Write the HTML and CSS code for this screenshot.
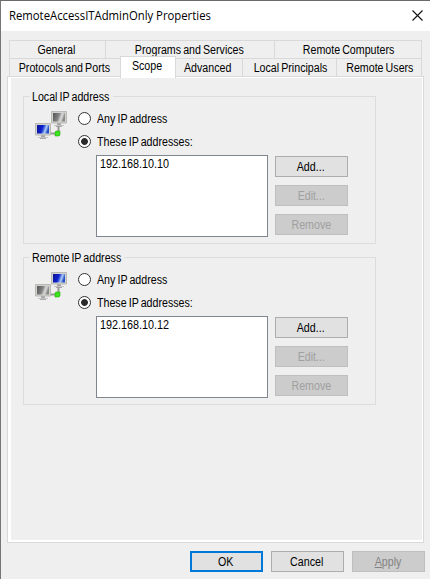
FILE: index.html
```html
<!DOCTYPE html>
<html lang="en">
<head>
<meta charset="utf-8">
<title>RemoteAccessITAdminOnly Properties</title>
<link rel="stylesheet" href="styles.css">
</head>
<body>
<svg class="defs" width="0" height="0" aria-hidden="true">
  <defs>
    <linearGradient id="blue" x1="0" y1="0" x2="1" y2=".25">
      <stop offset="0" stop-color="#0a1590"/><stop offset=".5" stop-color="#1020d0"/>
      <stop offset=".62" stop-color="#3c62dc"/><stop offset=".8" stop-color="#b4cdf5"/><stop offset="1" stop-color="#2450c8"/>
    </linearGradient>
    <linearGradient id="gray" x1="0" y1="0" x2="1" y2=".25">
      <stop offset="0" stop-color="#555"/><stop offset=".5" stop-color="#808080"/>
      <stop offset=".78" stop-color="#dcdcdc"/><stop offset="1" stop-color="#888"/>
    </linearGradient>
    <g id="frame">
      <path d="M6 12h4v2H6z" fill="#a5a5a5"/>
      <path d="M3 14h10v1H3z" fill="#c4c4c4"/><path d="M5 15h6v1H5z" fill="#aaa"/>
      <path d="M.5.5h15v11.500h-15z" fill="#d2d2cf" stroke="#b8b8b5"/>
    </g>
    <g id="cable">
      <path d="M23.500 15v5M16 22.500h5" fill="none" stroke="#999" stroke-width="2"/>
      <path d="M21 20h4v4l-1 1h-4v-4z" fill="#3be51c" stroke="#2ba616" stroke-width=".6"/>
    </g>
  </defs>
</svg>
<main class="dialog">
  <header class="titlebar">
    <h1 class="title">RemoteAccessITAdminOnly Properties</h1>
    <svg class="close" width="11" height="11" viewBox="0 0 11 11"><path d="M.5.5l10 10M10.500.5l-10 10" fill="none" stroke="#111" stroke-width="1.100"/></svg>
  </header>
  <nav class="tabs">
    <div class="row first">
      <div class="tab"><span class="t">General</span></div>
      <div class="tab"><span class="t">Programs and Services</span></div>
      <div class="tab"><span class="t">Remote Computers</span></div>
    </div>
    <div class="row second">
      <div class="tab"><span class="t">Protocols and Ports</span></div>
      <div class="tab active"><span class="t">Scope</span></div>
      <div class="tab"><span class="t">Advanced</span></div>
      <div class="tab"><span class="t">Local Principals</span></div>
      <div class="tab"><span class="t">Remote Users</span></div>
    </div>
  </nav>
  <section class="panel">
    <section class="group">
      <h2 class="legend local"><span class="t">Local IP address</span></h2>
      <svg class="icon" width="32" height="29" viewBox="0 0 32 29">
        <g transform="translate(16 0)"><use href="#frame"/><path d="M2 2h12v8.500H2z" fill="url(#gray)"/></g>
        <g transform="translate(0 12)"><use href="#frame"/><path d="M2 2h12v8.500H2z" fill="url(#blue)"/></g>
        <use href="#cable"/>
      </svg>
      <div class="options">
        <div class="radio"><i class="dot"></i><span class="t">Any IP address</span></div>
        <div class="radio"><i class="dot on"></i><span class="t">These IP addresses:</span></div>
        <div class="entry">
          <div class="list"><span class="t">192.168.10.10</span></div>
          <div class="actions">
            <div class="button"><span class="t">Add...</span></div>
            <div class="button off"><span class="t">Edit...</span></div>
            <div class="button off"><span class="t">Remove</span></div>
          </div>
        </div>
      </div>
    </section>
    <section class="group">
      <h2 class="legend remote"><span class="t">Remote IP address</span></h2>
      <svg class="icon" width="32" height="29" viewBox="0 0 32 29">
        <g transform="translate(16 0)"><use href="#frame"/><path d="M2 2h12v8.500H2z" fill="url(#blue)"/></g>
        <g transform="translate(0 12)"><use href="#frame"/><path d="M2 2h12v8.500H2z" fill="url(#gray)"/></g>
        <use href="#cable"/>
      </svg>
      <div class="options">
        <div class="radio"><i class="dot"></i><span class="t">Any IP address</span></div>
        <div class="radio"><i class="dot on"></i><span class="t">These IP addresses:</span></div>
        <div class="entry">
          <div class="list"><span class="t">192.168.10.12</span></div>
          <div class="actions">
            <div class="button"><span class="t">Add...</span></div>
            <div class="button off"><span class="t">Edit...</span></div>
            <div class="button off"><span class="t">Remove</span></div>
          </div>
        </div>
      </div>
    </section>
  </section>
  <footer class="footer">
    <div class="button primary"><span class="t">OK</span></div>
    <div class="button"><span class="t">Cancel</span></div>
    <div class="button off apply"><span class="t"><u>A</u>pply</span></div>
  </footer>
</main>
</body>
</html>
```

FILE: styles.css
```css
* { box-sizing: border-box; }
body { margin: 0; background: #efefef; overflow: hidden; }
.defs { position: absolute; }
.dialog {
  width: 430px; height: 579px;
  border-top: 1px solid #6b696b; border-left: 1px solid #777577;
  background: #efefef; color: #000;
  font: 12px/14px "Liberation Sans", Arial, sans-serif;
}
.t { display: inline-block; white-space: nowrap; word-spacing: -1px; transform: scaleX(.888); }
.titlebar {
  height: 30px; background: #fff; padding: 0 7px 2px 8px;
  display: flex; align-items: center; justify-content: space-between;
}
.title {
  margin: 2px 0 0; font: 400 12px/16px "Open Sans", "Noto Sans", sans-serif;
  white-space: nowrap; transform: scaleX(.943); transform-origin: left;
}
.close { display: block; }
.tabs { padding: 9px 0 0 8px; width: 421px; }
.row { display: grid; height: 18px; border-left: 1px solid #d9d9d9; }
.first { grid-template-columns: 96px 169px 147px; }
.second { grid-template-columns: 111px 55px 67px 94px 85px; }
.tab {
  display: flex; justify-content: center; padding: 2px 2px 0 0;
  border-top: 1px solid #d9d9d9; border-right: 1px solid #d9d9d9;
}
.second .tab:nth-child(n+4), .first .tab:last-child { padding: 2px 0 0 2px; }
.tab.active {
  position: relative; z-index: 1; background: #fff;
  margin: -2px 0 -2px -1px; border-left: 1px solid #d9d9d9;
}
.panel {
  margin-left: 6px; width: 417px; height: 467px; padding: 18px 0 0 12px;
  border: 1px solid #d9d9d9;
  box-shadow: inset 3px 0 #fff, inset -1px 0 #fff, inset 0 1px #fff, inset 0 -2px #fff;
}
.group {
  position: relative; width: 353px; height: 148px; margin: 1px 0 13px 3px;
  border: 1px solid #dcdcdc; display: flex; align-items: flex-start;
}
.legend {
  position: absolute; left: 6px; top: -7px; margin: 0; padding: 0 2px;
  background: #efefef; font: inherit;
}
.local { width: 83px; }
.remote { width: 94px; }
.legend .t, .radio .t, .list .t { transform-origin: left; }
.list .t { transform: scaleX(.9); }
.icon { margin: 14px 0 0 11px; flex: none; }
.options { margin: 15px 0 0 11px; }
.radio { display: flex; align-items: center; height: 13px; margin-bottom: 10px; gap: 6px; }
.dot {
  width: 13px; height: 13px; border: 1px solid #333; border-radius: 50%; background: #fff;
}
.dot.on { background: radial-gradient(circle, #2b2b2b 3px, #fff 3.800px); }
.entry { display: flex; gap: 7px; margin: -3px 0 0 18px; }
.list { width: 172px; height: 82px; border: 1px solid #7f868f; background: #fff; padding: 1px 3px; }
.actions { display: flex; flex-direction: column; gap: 8px; padding-top: 1px; }
.button {
  width: 73px; height: 21px; border: 1px solid #adadad; background: #e1e1e1;
  display: flex; align-items: center; justify-content: center; padding: 1px 1px 0 0;
}
.button.off { background: #ccc; border-color: #bfbfbf; color: #a0a0a0; }
.button.primary { border: 2px solid #0078d7; }
.button.apply { color: #838383; }
.footer { display: flex; justify-content: flex-end; gap: 8px; padding: 8px 5px 0 0; }
```
